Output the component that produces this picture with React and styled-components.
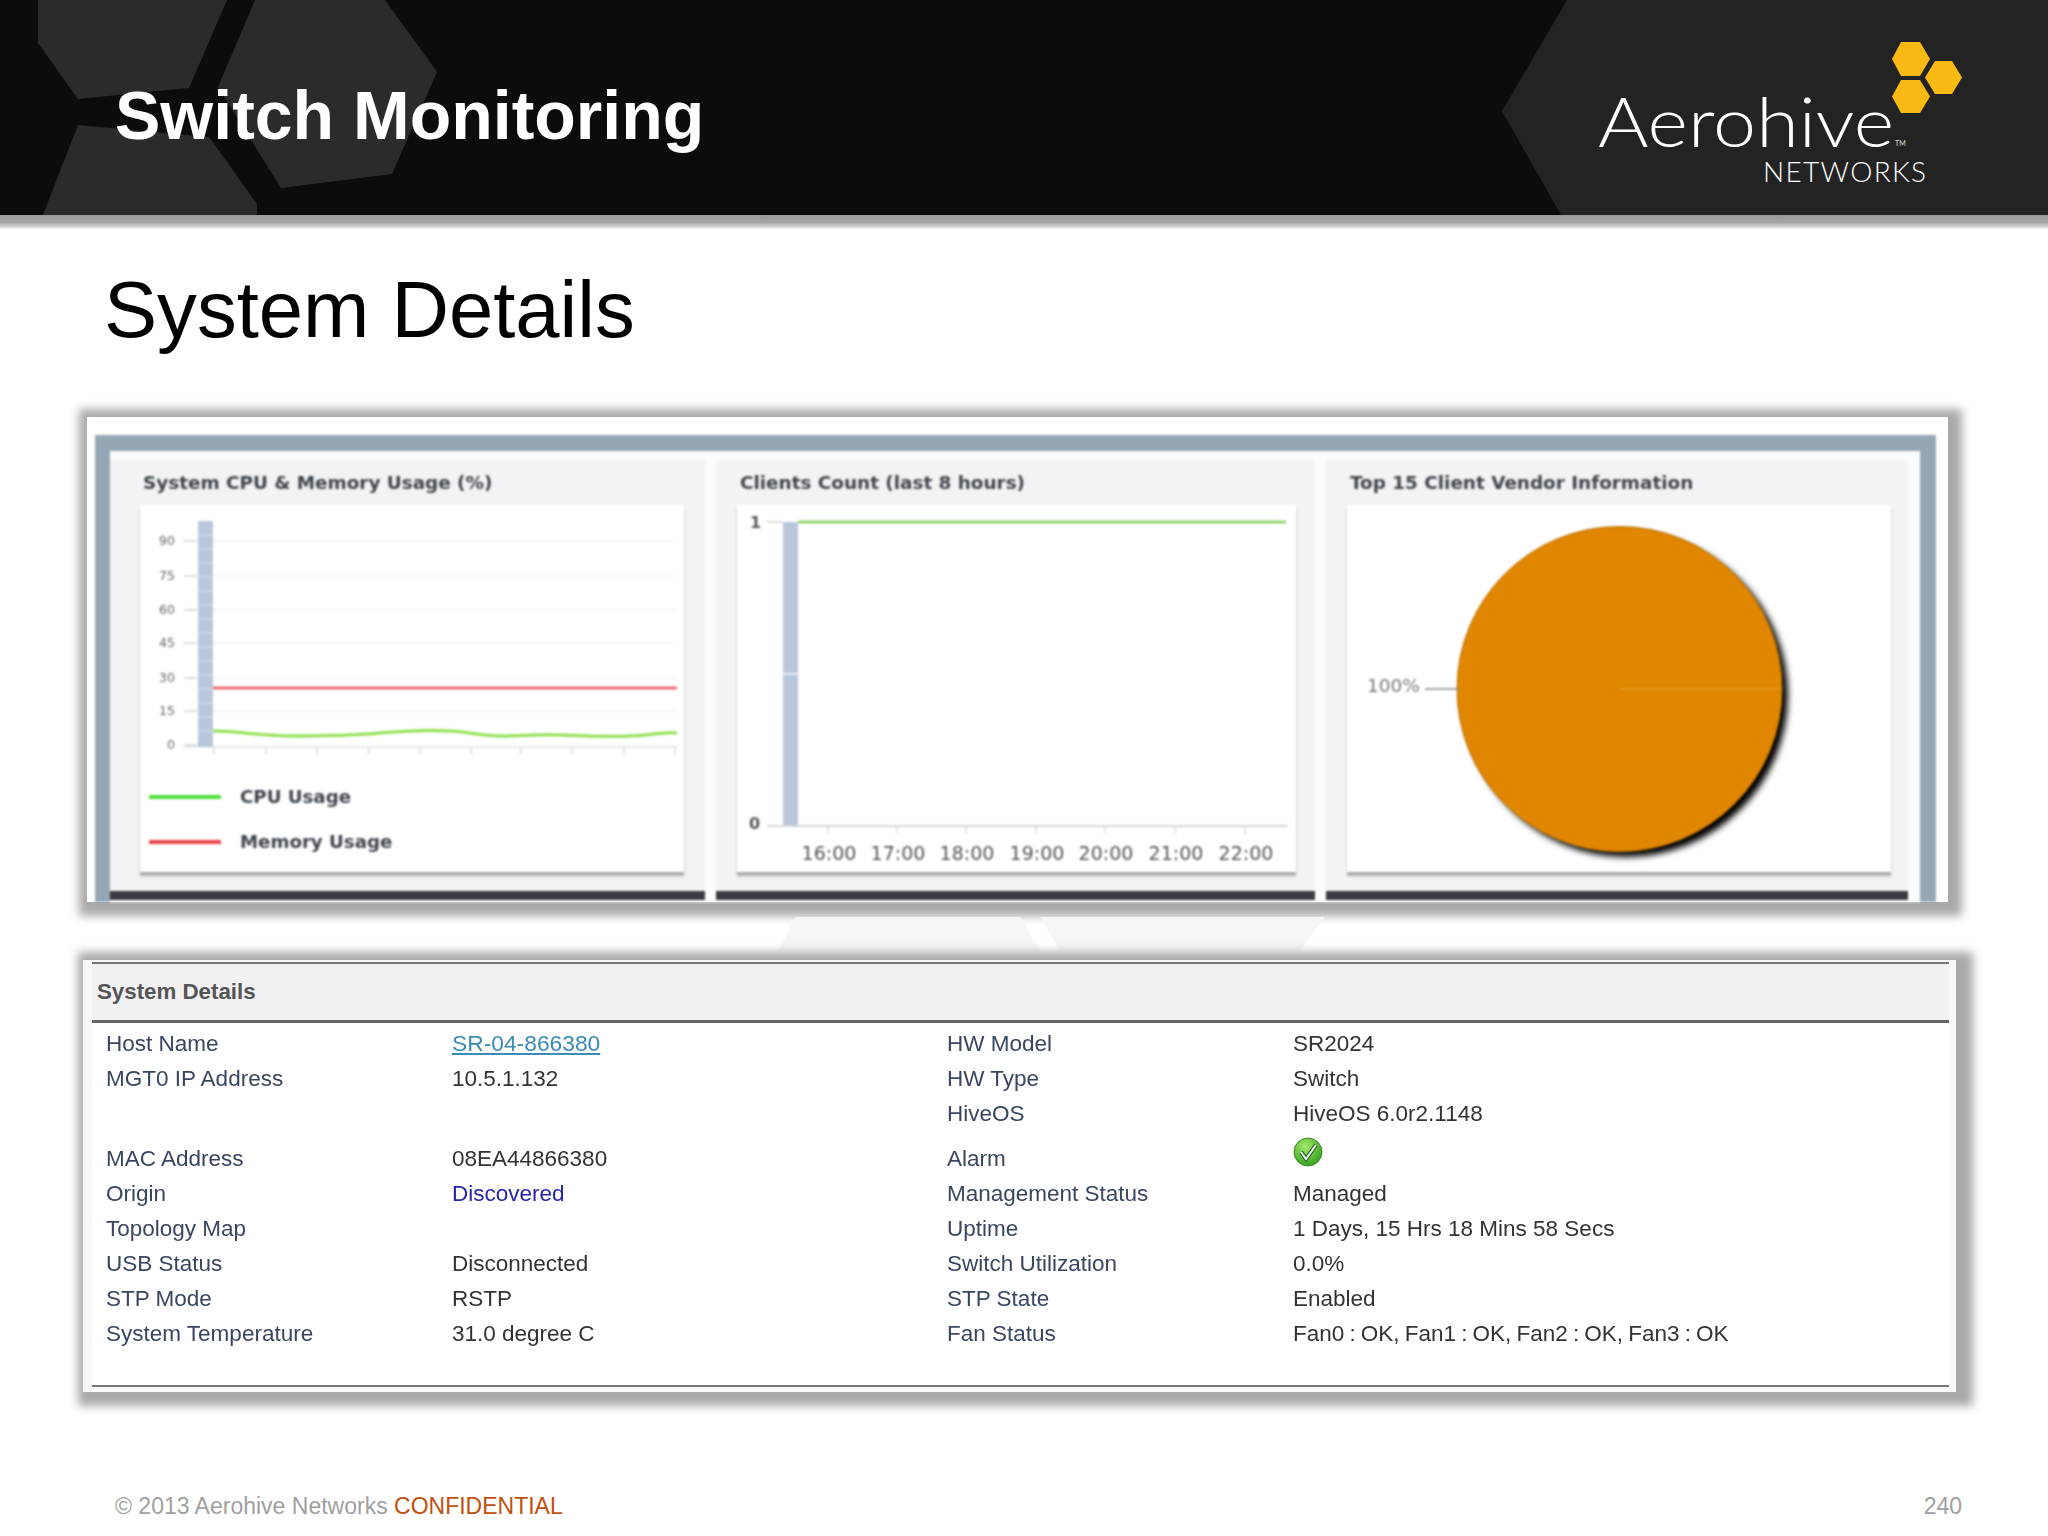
import React from 'react';
import styled, { createGlobalStyle } from 'styled-components';

const GlobalStyle = createGlobalStyle`
  html, body {
    margin: 0;
    padding: 0;
    background: #fff;
  }
`;

const Page = styled.div`
  position: relative;
  width: 2048px;
  height: 1536px;
  display: flex;
  flex-direction: column;
  overflow: hidden;
  background: #fff;
  font-family: "Liberation Sans", Arial, sans-serif;
`;

const Header = styled.header`
  position: relative;
  flex: none;
  height: 215px;
  display: flex;
  align-items: center;
  justify-content: space-between;
  padding: 0 83px 0 115px;
  box-sizing: border-box;
  background: #0c0c0c;
`;

const HeaderShapes = styled.svg`
  position: absolute;
  left: 0;
  top: 0;
`;

const HeaderTitle = styled.h1`
  position: relative;
  margin: 0 0 -14px;
  color: #fff;
  font-size: 68px;
  line-height: 1;
  font-weight: 700;
`;

const Logo = styled.svg`
  position: relative;
  display: block;
  margin-top: 11px;
`;

const HeaderShadow = styled.div`
  flex: none;
  height: 14px;
  background: linear-gradient(#999, #a6a6a6 55%, #d8d8d8 85%, #f8f8f8);
`;

const Heading = styled.h2`
  flex: none;
  height: 188px;
  margin: 0;
  padding: 41px 0 0 104px;
  box-sizing: border-box;
  color: #000;
  font-size: 79.6px;
  line-height: 80px;
  font-weight: 400;
`;

const ChartsPanel = styled.section`
  flex: none;
  width: 1861px;
  height: 485px;
  margin-left: 87px;
  padding: 18px 12px 0 8px;
  box-sizing: border-box;
  background: #fff;
  box-shadow: 3px 3px 9px 11px #a9a9a9;
`;

const ChartsFrame = styled.div`
  height: 100%;
  padding: 16px 16px 0 15px;
  box-sizing: border-box;
  background: #95a7b5;
  filter: blur(0.8px);
`;

const ChartsInner = styled.div`
  height: 100%;
  display: flex;
  gap: 11px;
  padding: 9px 10px 0 0;
  box-sizing: border-box;
  background: #fbfcfd;
`;

const Card = styled.div`
  flex: none;
  width: ${(p) => p.$width}px;
  height: 440px;
  padding-left: ${(p) => p.$inset}px;
  box-sizing: border-box;
  background: #f3f3f5;
  border-bottom: 9px solid #3a3a40;
  border-radius: 4px 4px 0 0;
`;

const CardTitle = styled.h3`
  height: 45px;
  margin: 0;
  padding-left: 3px;
  color: #3f454c;
  font-family: "DejaVu Sans", Verdana, sans-serif;
  font-size: 18.4px;
  font-weight: 700;
  line-height: 46px;
  white-space: nowrap;
`;

const ChartBox = styled.div`
  width: ${(p) => p.$width}px;
  height: 367px;
  background: #fff;
  box-shadow: 0 4px 2px #aaa;
`;

const ChartSvg = styled.svg`
  display: block;
  font-family: "DejaVu Sans", Verdana, sans-serif;
`;

const Legend = styled.div`
  display: flex;
  flex-direction: column;
  padding: 9px 0 0 9px;
`;

const LegendRow = styled.div`
  display: flex;
  align-items: center;
  gap: 19px;
  height: 45px;
`;

const LegendLine = styled.span`
  width: 72px;
  height: 4px;
  background: ${(p) => p.$color};
`;

const LegendLabel = styled.span`
  color: #3f454c;
  font-family: "DejaVu Sans", Verdana, sans-serif;
  font-size: 18.2px;
  font-weight: 700;
`;

const PanelGap = styled.svg`
  display: block;
  flex: none;
`;

const DetailsPanel = styled.section`
  flex: none;
  width: 1873px;
  height: 432px;
  margin-left: 83px;
  padding: 2px 7px 5px 9px;
  box-sizing: border-box;
  display: flex;
  flex-direction: column;
  background: #f8f8f8;
  box-shadow: 6px 3px 9px 11px #a9a9a9;
`;

const DetailsHead = styled.div`
  flex: none;
  height: 61px;
  padding-left: 5px;
  box-sizing: border-box;
  display: flex;
  align-items: center;
  border-top: 2px solid #777;
  border-bottom: 3px solid #666;
  background: #f1f1f3;
  color: #555;
  font-size: 22.3px;
  font-weight: 700;
`;

const DetailsBody = styled.div`
  flex: 1;
  padding: 3px 0 0 14px;
  background: #fff;
  border-bottom: 2px solid #777;
`;

const Row = styled.div`
  display: grid;
  grid-template-columns: 346px 495px 346px 1fr;
  align-items: end;
  height: ${(p) => (p.$tall ? 45 : 35)}px;
  filter: blur(0.4px);
`;

const Label = styled.span`
  color: #3a4660;
  font-size: 22.5px;
  line-height: 35px;
`;

const Value = styled.span`
  color: #333;
  font-size: 22.5px;
  line-height: 35px;
  word-spacing: ${(p) => (p.$tight ? -1.1 : 0)}px;
`;

const HostLink = styled.a`
  color: #3a8bb5;
  font-size: 22.8px;
  line-height: 35px;
  text-decoration: underline;
`;

const OriginValue = styled(Value)`
  color: #2626a8;
`;

const AlarmIcon = styled.svg`
  display: block;
  align-self: start;
  margin-top: 6px;
`;

const Footer = styled.footer`
  flex: none;
  height: 60px;
  margin-top: auto;
  padding: 0 86px 0 115px;
  display: flex;
  align-items: center;
  justify-content: space-between;
  color: #a0a0a0;
  font-size: 23px;
`;

const Confidential = styled.span`
  color: #c0500f;
`;

const cpuTicks = [74, 126, 177, 229, 280, 331, 381, 432, 484, 535];
const cpuAxis = [
  ['90', 36],
  ['75', 71],
  ['60', 105],
  ['45', 138],
  ['30', 173],
  ['15', 206],
  ['0', 240],
];
const hours = [
  ['16:00', 92],
  ['17:00', 161],
  ['18:00', 230],
  ['19:00', 300],
  ['20:00', 369],
  ['21:00', 439],
  ['22:00', 509],
];

const rows = [
  { label: 'Host Name', value: 'SR-04-866380', kind: 'link', label2: 'HW Model', value2: 'SR2024' },
  { label: 'MGT0 IP Address', value: '10.5.1.132', label2: 'HW Type', value2: 'Switch' },
  { label2: 'HiveOS', value2: 'HiveOS 6.0r2.1148' },
  { label: 'MAC Address', value: '08EA44866380', label2: 'Alarm', alarm: true },
  { label: 'Origin', value: 'Discovered', kind: 'origin', label2: 'Management Status', value2: 'Managed' },
  { label: 'Topology Map', label2: 'Uptime', value2: '1 Days, 15 Hrs 18 Mins 58 Secs' },
  { label: 'USB Status', value: 'Disconnected', label2: 'Switch Utilization', value2: '0.0%' },
  { label: 'STP Mode', value: 'RSTP', label2: 'STP State', value2: 'Enabled' },
  { label: 'System Temperature', value: '31.0 degree C', label2: 'Fan Status', value2: 'Fan0 : OK, Fan1 : OK, Fan2 : OK, Fan3 : OK', tight: true },
];

const CpuChart = () => (
  <ChartSvg width="544" height="260" viewBox="0 0 544 260">
    <rect x="58" y="16" width="15" height="226" fill="#b9c6dc" />
    {[30, 44, 58, 72, 86, 100, 114, 128, 142, 156, 170, 184, 198, 212, 226].map((y) => (
      <line key={y} x1="58" x2="73" y1={y} y2={y} stroke="#dbe2ee" strokeWidth="1" />
    ))}
    {cpuAxis.map(([text, y]) => (
      <g key={text}>
        <text x="35" y={y + 4} fontSize="12.5" textAnchor="end" fill="#666">{text}</text>
        <line x1="44" x2="57" y1={y} y2={y} stroke="#bbb" />
        {text !== '0' && <line x1="73" x2="537" y1={y} y2={y} stroke="#eee" />}
      </g>
    ))}
    <line x1="44" x2="537" y1="242" y2="242" stroke="#c9d6dc" />
    {cpuTicks.map((x) => (
      <line key={x} x1={x} x2={x} y1="242" y2="250" stroke="#ccc" />
    ))}
    <line x1="73" x2="537" y1="183" y2="183" stroke="#e8505a" strokeWidth="2.5" />
    <path
      d="M73 226 C100 226 120 231 150 231 S 210 231 240 228 S 290 225 310 226 S 340 231 360 231 S 395 229 420 230 S 470 232 490 231 S 525 227 537 228"
      fill="none"
      stroke="#8fe04f"
      strokeWidth="3"
    />
  </ChartSvg>
);

const ClientsChart = () => (
  <ChartSvg width="559" height="367" viewBox="0 0 559 367">
    <rect x="46" y="17" width="15" height="303" fill="#b9c6dc" />
    <line x1="46" x2="61" y1="169" y2="169" stroke="#e6ebf3" strokeWidth="2" />
    <line x1="30" x2="46" y1="17" y2="17" stroke="#bbb" />
    <line x1="30" x2="551" y1="321" y2="321" stroke="#c9c9cf" strokeWidth="1.5" />
    <line x1="61" x2="549" y1="17" y2="17" stroke="#7fcf55" strokeWidth="2.5" />
    <text x="13" y="23" fontSize="16" fontWeight="700" fill="#555">1</text>
    <text x="12" y="324" fontSize="16" fontWeight="700" fill="#555">0</text>
    {hours.map(([text, x]) => (
      <g key={text}>
        <line x1={x - 1} x2={x - 1} y1="321" y2="329" stroke="#ccc" />
        <text x={x} y="355" fontSize="19" textAnchor="middle" fill="#555">{text}</text>
      </g>
    ))}
  </ChartSvg>
);

const VendorChart = () => (
  <ChartSvg width="544" height="367" viewBox="0 0 544 367">
    <defs>
      <filter id="pieShadow" x="-10%" y="-10%" width="120%" height="120%">
        <feGaussianBlur stdDeviation="3" />
      </filter>
    </defs>
    <circle cx="279" cy="190" r="162" fill="#000" filter="url(#pieShadow)" />
    <circle cx="272.5" cy="184" r="162.5" fill="#e08600" stroke="#b86e00" strokeWidth="1" />
    <line x1="272" x2="433" y1="184" y2="184" stroke="#e99c22" strokeWidth="1.5" />
    <line x1="78" x2="112" y1="184" y2="184" stroke="#888" strokeWidth="1.5" />
    <text x="20" y="187" fontSize="18.5" fill="#777">100%</text>
  </ChartSvg>
);

const App = () => (
  <Page>
    <GlobalStyle />
    <Header>
      <HeaderShapes width="2048" height="215" viewBox="0 0 2048 215">
        <polygon points="38,0 38,43 78,99 189,88 227,0" fill="#2b2b2b" />
        <polygon points="255,0 385,0 437,72 392,174 281,188 218,87" fill="#2b2b2b" />
        <polygon points="78,125 209,137 257,204 257,215 43,215" fill="#2b2b2b" />
        <polygon points="1567,0 2048,0 2048,215 1561,215 1502,111" fill="#232323" />
      </HeaderShapes>
      <HeaderTitle>Switch Monitoring</HeaderTitle>
      <Logo width="370" height="150" viewBox="1595 38 370 150">
        <polygon points="1901,42 1920,42 1930,59 1920,76 1901,76 1892,59" fill="#fbb914" />
        <polygon points="1935,61 1952,61 1962,77.5 1952,94 1935,94 1925,77.5" fill="#fbb914" />
        <polygon points="1901,80 1920,80 1930,96.5 1920,113 1901,113 1892,96.5" fill="#fbb914" />
        <text x="1598" y="147" fontFamily="Lato, sans-serif" fontWeight="300" fontSize="69" fill="#fff" textLength="296" lengthAdjust="spacingAndGlyphs">Aerohive</text>
        <text x="1895" y="146" fontFamily="Lato, sans-serif" fontSize="7" fill="#ddd">TM</text>
        <text x="1763" y="182" fontFamily="Lato, sans-serif" fontWeight="300" fontSize="28" fill="#fff" textLength="163" lengthAdjust="spacing">NETWORKS</text>
      </Logo>
    </Header>
    <HeaderShadow />
    <Heading>System Details</Heading>

    <ChartsPanel>
      <ChartsFrame>
        <ChartsInner>
          <Card $width={595} $inset={30}>
            <CardTitle>System CPU &amp; Memory Usage (%)</CardTitle>
            <ChartBox $width={544}>
              <CpuChart />
              <Legend>
                <LegendRow>
                  <LegendLine $color="#4fe03c" />
                  <LegendLabel>CPU Usage</LegendLabel>
                </LegendRow>
                <LegendRow>
                  <LegendLine $color="#e8434a" />
                  <LegendLabel>Memory Usage</LegendLabel>
                </LegendRow>
              </Legend>
            </ChartBox>
          </Card>
          <Card $width={599} $inset={21}>
            <CardTitle>Clients Count (last 8 hours)</CardTitle>
            <ChartBox $width={559}>
              <ClientsChart />
            </ChartBox>
          </Card>
          <Card $width={582} $inset={21}>
            <CardTitle>Top 15 Client Vendor Information</CardTitle>
            <ChartBox $width={544}>
              <VendorChart />
            </ChartBox>
          </Card>
        </ChartsInner>
      </ChartsFrame>
    </ChartsPanel>

    <PanelGap width="2048" height="58" viewBox="0 0 2048 58">
      <polygon points="796,15 1020,15 1040,49 778,49" fill="#f6f6f8" />
      <polygon points="1040,15 1325,15 1300,49 1060,49" fill="#f6f6f8" />
    </PanelGap>

    <DetailsPanel>
      <DetailsHead>System Details</DetailsHead>
      <DetailsBody>
        {rows.map((row) => (
          <Row key={row.label2} $tall={row.alarm}>
            <Label>{row.label}</Label>
            {row.kind === 'link' ? (
              <span><HostLink href="#">{row.value}</HostLink></span>
            ) : row.kind === 'origin' ? (
              <OriginValue>{row.value}</OriginValue>
            ) : (
              <Value>{row.value}</Value>
            )}
            <Label>{row.label2}</Label>
            {row.alarm ? (
              <AlarmIcon width="30" height="30" viewBox="0 0 30 30">
                <defs>
                  <radialGradient id="alarmGreen" cx="40%" cy="30%" r="75%">
                    <stop offset="0%" stopColor="#a6e86a" />
                    <stop offset="100%" stopColor="#2f9e1e" />
                  </radialGradient>
                </defs>
                <circle cx="15" cy="15" r="14" fill="url(#alarmGreen)" stroke="#3a8a2a" />
                <path d="M8 15 L13 22 L23 8" fill="none" stroke="#1d5e18" strokeWidth="4" />
                <path d="M8 15 L13 22 L23 8" fill="none" stroke="#fff" strokeWidth="2" />
              </AlarmIcon>
            ) : (
              <Value $tight={row.tight}>{row.value2}</Value>
            )}
          </Row>
        ))}
      </DetailsBody>
    </DetailsPanel>

    <Footer>
      <span>© 2013 Aerohive Networks <Confidential>CONFIDENTIAL</Confidential></span>
      <span>240</span>
    </Footer>
  </Page>
);

export default App;
